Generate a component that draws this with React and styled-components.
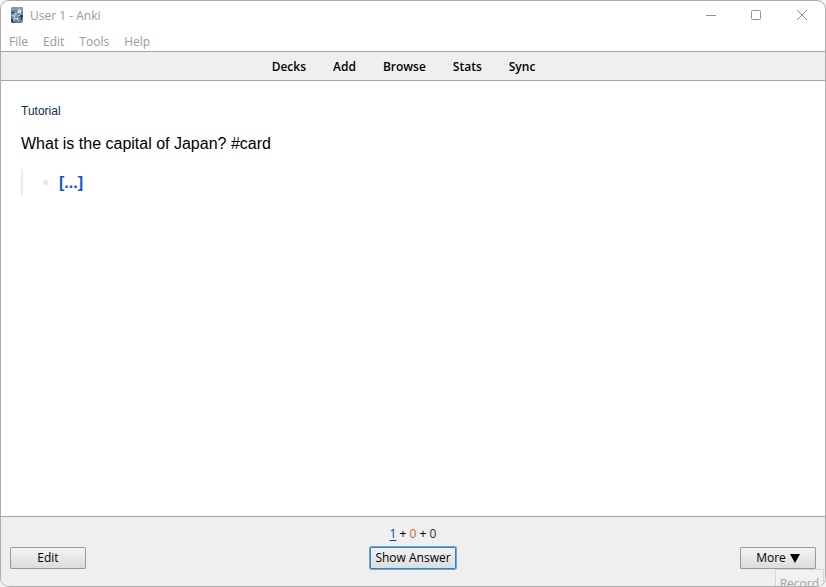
import React from "react";
import styled, { createGlobalStyle } from "styled-components";

const GlobalStyle = createGlobalStyle`
  *, *::before, *::after { box-sizing: border-box; }
  body {
    margin: 0;
    background: #f3f3f3;
    color: #000;
    font-family: "Open Sans", "Noto Sans", sans-serif;
    font-size: 12px;
    line-height: 16px;
  }
`;

const Window = styled.div`
  position: relative;
  display: flex;
  flex-direction: column;
  height: 100vh;
  overflow: hidden;
  background: #fff;
  border: 1px solid #adadad;
  border-radius: 9px;
`;

const TitleBar = styled.header`
  display: flex;
  align-items: center;
  justify-content: space-between;
  height: 30px;
  padding-left: 9px;
`;

const Title = styled.h1`
  display: flex;
  align-items: center;
  gap: 6px;
  margin: 0;
  font-size: 12px;
  font-weight: 400;
  line-height: 16px;
  color: #999;
`;

const WindowControls = styled.div`
  display: flex;
  height: 100%;
`;

const ControlButton = styled.button`
  display: grid;
  place-items: center;
  width: 46px;
  padding: 0;
  border: 0;
  background: none;
  color: #909090;
`;

const MenuBar = styled.nav`
  display: flex;
  align-items: center;
  gap: 15px;
  height: 20px;
  padding: 2px 0 0 8px;
`;

const MenuButton = styled.button`
  padding: 0;
  border: 0;
  background: none;
  color: #999;
  font: inherit;
`;

const Toolbar = styled.nav`
  display: flex;
  align-items: center;
  justify-content: center;
  gap: 27px;
  height: 30px;
  padding: 2px 19px 0 0;
  background: #efefef;
  border: solid #a5a5a5;
  border-width: 1px 0;
`;

const ToolbarLink = styled.a`
  color: #000;
  font-weight: 600;
  text-decoration: none;
`;

const Card = styled.main`
  flex: 1;
  padding: 20px;
  font-family: "Liberation Sans", Arial, sans-serif;
  font-size: 16px;
  line-height: 26px;
`;

const DeckLink = styled.a`
  display: block;
  margin-bottom: 10px;
  font-size: 12px;
  line-height: 20px;
  color: #0d2c54;
  text-decoration: none;
`;

const Question = styled.p`
  margin: 0 0 12px;
  line-height: 26px;
`;

const ChildBlocks = styled.ul`
  margin: 0;
  padding: 0 0 0 20px;
  border-left: 2px solid #ebebeb;
  list-style: none;
`;

const Block = styled.li`
  display: flex;
  align-items: center;
  gap: 11px;

  &::before {
    content: "";
    width: 5px;
    height: 5px;
    border-radius: 50%;
    background: #e6e6e6;
  }
`;

const Cloze = styled.strong`
  padding-top: 2px;
  line-height: 24px;
  color: #0b54d6;
`;

const BottomBar = styled.footer`
  display: grid;
  grid-template-columns: 1fr auto 1fr;
  align-items: end;
  height: 70px;
  padding: 0 9px 17px;
  background: #efefef;
  border-top: 1px solid #a5a5a5;
`;

const Answer = styled.div`
  display: flex;
  flex-direction: column;
  align-items: center;
  gap: 5px;
`;

const Counts = styled.div`
  white-space: pre;
`;

const Count = styled.span`
  color: ${({ $color }) => $color};
  text-decoration: ${({ $active }) => ($active ? "underline" : "none")};
  text-underline-offset: 2px;
`;

const ActionButton = styled.button`
  display: flex;
  align-items: center;
  justify-content: center;
  gap: 4px;
  justify-self: ${({ $side }) => $side || "center"};
  min-width: 76px;
  height: 22px;
  padding: 0 4px;
  border: 1px solid #999;
  border-radius: 1px;
  background: linear-gradient(#f3f3f3, #dcdcdc);
  color: #000;
  font: inherit;
  white-space: nowrap;
`;

const PrimaryButton = styled(ActionButton)`
  border-color: #3c7fb1;
  outline: 1px solid #6ba9dc;
`;

const Tooltip = styled.div`
  position: absolute;
  right: 1px;
  bottom: -6px;
  height: 23px;
  padding: 5px 4px;
  border: 1px solid #d6d6d6;
  background: #f1f1f1;
  color: #a3a3a3;
  line-height: 18px;
`;

const AppIcon = () => (
  <svg width="14" height="18" viewBox="0 1 14 18" aria-hidden="true">
    <rect x="1" y="1" width="12" height="16" rx="2" fill="#718391" />
    <path d="M1 4V3q0-2 2-2h8q2 0 2 2v1z" fill="#8d98a0" />
    <path d="M1 6h3v1H1zM9 9h4v2h-1v3h-1v-3H9z" fill="#492d2c" />
    <path d="M1 13h2v3h2v1H3q-2 0-2-2z" fill="#5c2b29" />
    <path d="M6 6l1 3 4 0-3 2 1 4-3-2-3 2 1-4-3-2h3z" fill="#a7d8f3" />
    <path d="M5 9h3v3H5z" fill="#4c9bd4" />
    <path d="M9 2l1 2 2 0-1 2v2L9 7 7 7l1-2-1-1h2z" fill="#d6e6ef" />
  </svg>
);

const ControlIcon = ({ d }) => (
  <svg width="12" height="12" viewBox="0 0 12 12" fill="none" stroke="currentColor" aria-hidden="true">
    <path d={d} />
  </svg>
);

const controls = [
  ["Minimize", "M2 5.5h10"],
  ["Maximize", "M2.5 .5h7q1 0 1 1v7q0 1-1 1h-7q-1 0-1-1v-7q0-1 1-1z"],
  ["Close", "M1 0l10 10M11 0L1 10"],
];

export default function App() {
  return (
    <>
      <GlobalStyle />
      <Window>
        <TitleBar>
          <Title>
            <AppIcon />
            User 1 - Anki
          </Title>
          <WindowControls>
            {controls.map(([label, d]) => (
              <ControlButton key={label} type="button" aria-label={label}>
                <ControlIcon d={d} />
              </ControlButton>
            ))}
          </WindowControls>
        </TitleBar>
        <MenuBar aria-label="Menu">
          {["File", "Edit", "Tools", "Help"].map((name) => (
            <MenuButton key={name} type="button">{name}</MenuButton>
          ))}
        </MenuBar>
        <Toolbar aria-label="Main">
          {["Decks", "Add", "Browse", "Stats", "Sync"].map((name) => (
            <ToolbarLink key={name} href="#">{name}</ToolbarLink>
          ))}
        </Toolbar>
        <Card>
          <DeckLink href="#">Tutorial</DeckLink>
          <Question>What is the capital of Japan? #card</Question>
          <ChildBlocks>
            <Block><Cloze>[...]</Cloze></Block>
          </ChildBlocks>
        </Card>
        <BottomBar>
          <ActionButton type="button" $side="start">Edit</ActionButton>
          <Answer>
            <Counts>
              <Count $color="#0044c8" $active>1</Count> + <Count $color="#c07020">0</Count> + <Count $color="#17382b">0</Count>
            </Counts>
            <PrimaryButton type="button">Show Answer</PrimaryButton>
          </Answer>
          <ActionButton type="button" $side="end">
            More
            <svg width="10" height="9" viewBox="0 0 10 9" aria-hidden="true">
              <path d="M0 0h10L5 9z" />
            </svg>
          </ActionButton>
        </BottomBar>
        <Tooltip role="tooltip">Record</Tooltip>
      </Window>
    </>
  );
}
